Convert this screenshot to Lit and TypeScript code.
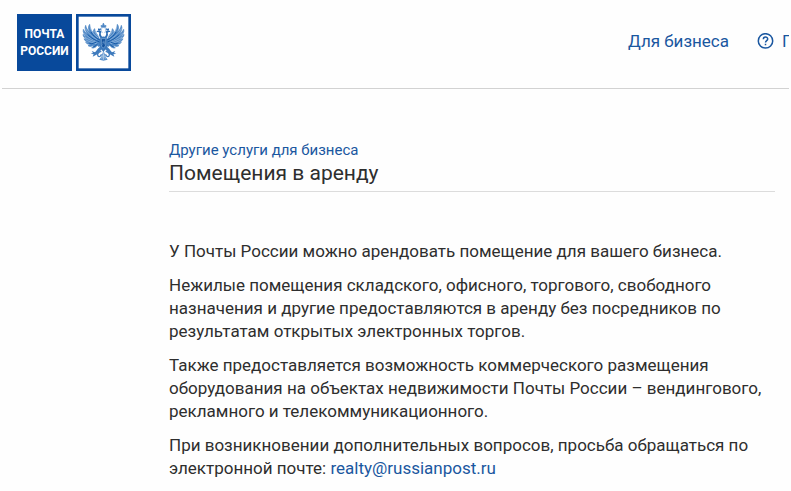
import { LitElement, html, css, svg } from "lit";
import { customElement } from "lit/decorators.js";

// One wing of the emblem; the other is its mirror image.
const wing = svg`
  <path d="M82 92 C76 84 74 76 70 70 C66 65 63 60 62 52 C58 54 57 60 60 66 C52 60 48 50 47 39 C42 45 42 54 48 63 C40 57 37 50 35 42 C31 50 34 60 41 68 C34 65 31 59 28 54 C26 62 30 70 38 76 C33 75 30 72 27 69 C27 76 32 82 40 84 C36 85 33 84 30 82 C32 89 38 92 44 92 C41 94 38 94 35 93 C39 99 45 100 50 98 C48 101 45 102 42 103 C48 107 55 105 59 101 C58 105 56 108 53 110 C61 111 67 107 70 101 C72 107 76 106 82 102 Z" fill="#4d86c4" stroke="#4d86c4" stroke-width="2" stroke-linejoin="round"/>
  <path d="M48 46 C51 60 60 70 72 80 M35 52 C42 66 54 76 69 85 M30 64 C40 76 53 84 69 90 M32 77 C42 84 54 89 70 94 M37 87 C47 92 58 94 69 98 M62 58 C64 67 70 72 77 78" fill="none" stroke="#b9d3ee" stroke-width="1.5"/>
  <path d="M51 62 C57 73 65 80 78 86 M42 70 C51 81 62 86 77 92 M46 97 C54 98 61 95 68 92 M58 107 C65 104 68 101 71 97" fill="none" stroke="#155aa8" stroke-width="3"/>
  <path d="M84 76 C79 70 80 65 82 61 C78 55 70 56 67 63 C72 61 75 62 76 65 C73 72 78 80 85 84 Z" fill="#2d6db5"/>
  <path d="M72 57 L72 51 L76 53 L79 49 L81 56 Z" fill="#2d6db5"/>
  <path d="M81 105 C72 109 69 117 63 123 L53 119 L57 125 L50 127 L59 129 L56 136 L67 130 C74 127 78 119 84 113" fill="#3f7bbd"/>
  <path d="M82 120 C74 121 68 128 72 134 C76 138 82 134 82 129" fill="none" stroke="#3f7bbd" stroke-width="4"/>
  <path d="M88 118 L82 136 L76 145 L89 148 Z" fill="#5b91cb"/>`;

const emblem = svg`
  <svg class="emblem" viewBox="6 8 165 171" aria-hidden="true">
    <rect x="10" y="12" width="157" height="163" fill="#fff" stroke="#08499b" stroke-width="8"/>
    <g>${wing}</g>
    <g transform="translate(177 0) scale(-1 1)">${wing}</g>
    <path d="M82 48 L81 42 L85 44 L88 35 L92 44 L96 42 L95 48 Z" fill="#4d86c4" stroke="#4d86c4" stroke-width="2"/>
    <path d="M84 50 C81 54 82 60 85 65 M93 50 C96 54 95 60 92 65" fill="none" stroke="#76a5d5" stroke-width="2"/>
    <path d="M79 78 Q88 73 98 78 L101 102 Q97 114 88 122 Q80 114 76 102 Z" fill="#3b78bb"/>
    <path d="M82 82 H95 V100 Q95 106 88 110 Q82 106 82 100 Z" fill="#12509c" stroke="#a9c8e8" stroke-width="1.5"/>
    <path d="M85 102 L90 88 L93 101 M84 92 L93 96" fill="none" stroke="#6d9fd3" stroke-width="1.5"/>
    <path d="M83 142 L86 132 M88 145 V128 M94 142 L91 132" fill="none" stroke="#e3eef9" stroke-width="1.5"/>
  </svg>`;

@customElement("app-root")
export class AppRoot extends LitElement {
  static styles = css`
    :host {
      display: block;
      min-height: 100vh;
      background: #fefefe;
      color: #2e2e2e;
      font-family: Roboto, "Noto Sans", sans-serif;
      overflow: hidden;
    }
    a {
      color: #1a57a0;
      text-decoration: none;
    }
    .header {
      display: flex;
      justify-content: space-between;
      align-items: flex-start;
      margin: 0 2px;
      padding: 14px 0 17px 15px;
      border-bottom: 1px solid #d2d2d2;
    }
    .logo {
      display: flex;
      gap: 4px;
    }
    .wordmark {
      display: flex;
      flex-direction: column;
      justify-content: center;
      align-items: center;
      width: 55px;
      height: 57px;
      background: #08499b;
      color: #fff;
      font: bold 12px/17px Roboto, sans-serif;
    }
    .emblem {
      display: block;
      width: 55px;
      height: 57px;
    }
    .nav {
      display: flex;
      align-items: center;
      gap: 28px;
      padding-top: 14px;
      font-size: 17px;
      line-height: 26px;
      white-space: nowrap;
    }
    .help {
      display: flex;
      align-items: center;
      gap: 8px;
      width: 32px;
      overflow: hidden;
    }
    .help svg {
      flex: none;
      width: 17px;
      height: 17px;
    }
    main {
      margin: 51px 16px 0 169px;
    }
    .crumb {
      display: block;
      width: fit-content;
      font-size: 15px;
      line-height: 20px;
    }
    h1 {
      margin: 0 0 48px;
      padding-bottom: 5px;
      border-bottom: 1px solid #dcdcdc;
      font-size: 21px;
      line-height: 26px;
      font-weight: 400;
    }
    p {
      max-width: 600px;
      margin: 0 0 11px;
      font-size: 17px;
      line-height: 23px;
    }
  `;

  render() {
    return html`
      <header class="header">
        <a class="logo" href="#" aria-label="Почта России">
          <span class="wordmark"><span>ПОЧТА</span><span>РОССИИ</span></span>
          ${emblem}
        </a>
        <nav class="nav">
          <a href="#">Для бизнеса</a>
          <a class="help" href="#">
            <svg viewBox="0 0 17 17" fill="none" stroke="currentColor" stroke-width="1.5" aria-hidden="true">
              <circle cx="8.5" cy="7.9" r="7.2" />
              <path d="M6.3 6.2 C6.3 3.2 10.7 3.3 10.7 6 C10.7 7.7 8.5 7.6 8.5 9.5 M8.5 10.7 V12.3" />
            </svg>
            <span>П</span>
          </a>
        </nav>
      </header>
      <main>
        <a class="crumb" href="#">Другие услуги для бизнеса</a>
        <h1>Помещения в аренду</h1>
        <p>У Почты России можно арендовать помещение для вашего бизнеса.</p>
        <p>Нежилые помещения складского, офисного, торгового, свободного назначения и другие предоставляются в аренду без посредников по результатам открытых электронных торгов.</p>
        <p>Также предоставляется возможность коммерческого размещения оборудования на объектах недвижимости Почты России – вендингового, рекламного и телекоммуникационного.</p>
        <p>При возникновении дополнительных вопросов, просьба обращаться по электронной почте: <a href="mailto:realty@russianpost.ru">realty@russianpost.ru</a></p>
      </main>
    `;
  }
}
